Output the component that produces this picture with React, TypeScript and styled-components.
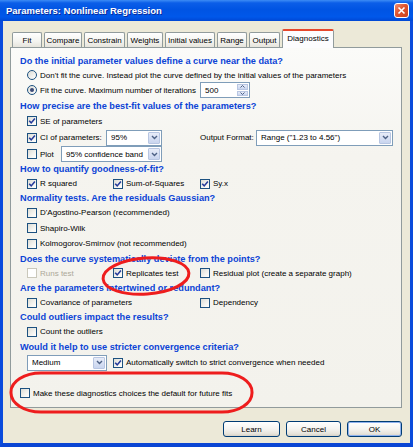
import React from 'react'
import styled, { createGlobalStyle } from 'styled-components'

const GlobalStyle = createGlobalStyle`
  html, body {
    margin: 0;
    padding: 0;
    background: #ffffff;
  }
  body {
    font-family: "Liberation Sans", Arial, sans-serif;
    font-size: 8px;
    color: #000000;
  }
`

const Window = styled.div`
  position: relative;
  width: 413px;
  height: 447px;
  display: flex;
  flex-direction: column;
  background: #ece9d8;
  overflow: hidden;
`

const TitleBar = styled.div`
  height: 21px;
  flex: none;
  display: flex;
  align-items: center;
  justify-content: space-between;
  padding: 0 4px 0 6px;
  background: linear-gradient(
    to bottom,
    #3d8cf5 0%,
    #0b5ee8 14%,
    #0054e3 45%,
    #0058ea 80%,
    #0047d4 100%
  );
`

const Title = styled.span`
  font-weight: bold;
  font-size: 9.5px;
  color: #ffffff;
  text-shadow: 1px 1px 0 #0b2b9a;
  white-space: nowrap;
`

const CloseButton = styled.div`
  width: 15px;
  height: 15px;
  box-sizing: border-box;
  border: 1px solid #ffffff;
  border-radius: 3px;
  background: linear-gradient(135deg, #f08e70 0%, #e0542f 45%, #c8411d 100%);
  display: flex;
  align-items: center;
  justify-content: center;
`

const Frame = styled.div`
  flex: 1;
  display: flex;
  flex-direction: column;
  border-left: 3px solid #0a4bdc;
  border-right: 3px solid #0a4bdc;
  border-bottom: 4px solid #0a45d4;
  padding: 8px 8px 0 7px;
`

const TabStrip = styled.div`
  height: 18px;
  flex: none;
  display: flex;
  align-items: flex-end;
  gap: 2px;
  padding-left: 2px;
`

const Tab = styled.div<{ $w: number; $active?: boolean }>`
  width: ${p => p.$w}px;
  height: ${p => (p.$active ? 19 : 15)}px;
  margin-bottom: ${p => (p.$active ? -1 : 0)}px;
  position: relative;
  z-index: ${p => (p.$active ? 2 : 1)};
  box-sizing: border-box;
  display: flex;
  align-items: center;
  justify-content: center;
  padding-bottom: ${p => (p.$active ? 2 : 0)}px;
  border: 1px solid #919b9c;
  border-bottom: none;
  border-top: ${p => (p.$active ? '2px solid #e6472c' : '1px solid #919b9c')};
  border-radius: 2px 2px 0 0;
  background: ${p =>
    p.$active ? '#fcfcfe' : 'linear-gradient(to bottom, #ffffff 0%, #f3f3ef 60%, #e6e4dc 100%)'};
  white-space: nowrap;
`

const Panel = styled.div`
  height: 361px;
  flex: none;
  box-sizing: border-box;
  border: 1px solid #919b9c;
  padding: 6px 0 0 9px;
  display: flex;
  flex-direction: column;
  background: linear-gradient(to bottom, #fbfbf9 0%, #f5f4ef 30%, #f3f2ec 100%);
`

const Heading = styled.div<{ $h: number }>`
  height: ${p => p.$h}px;
  flex: none;
  display: flex;
  align-items: center;
  font-weight: bold;
  font-size: 9.2px;
  color: #0c44d6;
  white-space: nowrap;
`

const Row = styled.div<{ $h: number; $pl?: number; $mt?: number }>`
  height: ${p => p.$h}px;
  flex: none;
  display: flex;
  align-items: center;
  padding-left: ${p => p.$pl ?? 7}px;
  margin-top: ${p => p.$mt ?? 0}px;
  white-space: nowrap;
`

const Cell = styled.div<{ $w?: number }>`
  ${p => (p.$w ? `width: ${p.$w}px; flex: none;` : 'flex: 1;')}
  display: flex;
  align-items: center;
`

const OptionLabel = styled.label<{ $disabled?: boolean }>`
  display: flex;
  align-items: center;
  gap: 3px;
  color: ${p => (p.$disabled ? '#aca899' : '#000000')};
  white-space: nowrap;
`

const Box = styled.span<{ $disabled?: boolean }>`
  width: 10px;
  height: 10px;
  flex: none;
  box-sizing: border-box;
  border: 1px solid ${p => (p.$disabled ? '#cac8bb' : '#1c5180')};
  background: ${p =>
    p.$disabled ? '#ffffff' : 'linear-gradient(135deg, #dcdcd5 0%, #f4f4f0 60%, #ffffff 100%)'};
  display: flex;
  align-items: center;
  justify-content: center;
`

const Radio = styled.span`
  width: 10px;
  height: 10px;
  flex: none;
  box-sizing: border-box;
  border: 1px solid #1c5180;
  border-radius: 50%;
  background: linear-gradient(135deg, #dcdcd5 0%, #ffffff 100%);
  display: flex;
  align-items: center;
  justify-content: center;
`

const Dot = styled.span`
  width: 4px;
  height: 4px;
  border-radius: 50%;
  background: #3a4a78;
`

const Field = styled.div<{ $w: number }>`
  width: ${p => p.$w}px;
  height: 16px;
  flex: none;
  box-sizing: border-box;
  border: 1px solid #7f9db9;
  background: #ffffff;
  display: flex;
  align-items: center;
  justify-content: space-between;
  padding: 1px;
`

const FieldText = styled.span`
  padding-left: 3px;
  white-space: nowrap;
`

const DropButton = styled.span`
  width: 12px;
  height: 12px;
  flex: none;
  box-sizing: border-box;
  border: 1px solid #b8c6e2;
  border-radius: 1px;
  background: linear-gradient(to bottom, #e7ecf8 0%, #c9d5ef 100%);
  display: flex;
  align-items: center;
  justify-content: center;
`

const SpinButtons = styled.span`
  width: 11px;
  height: 12px;
  flex: none;
  display: flex;
  flex-direction: column;
  gap: 1px;
`

const SpinPart = styled.span`
  flex: 1;
  box-sizing: border-box;
  border: 1px solid #b8c6e2;
  background: linear-gradient(to bottom, #e7ecf8 0%, #c9d5ef 100%);
  display: flex;
  align-items: center;
  justify-content: center;
`

const FieldCaption = styled.span`
  width: 56px;
  flex: none;
  white-space: nowrap;
`

const ButtonRow = styled.div`
  display: flex;
  justify-content: flex-end;
  gap: 6px;
  padding-top: 13px;
`

const Button = styled.div<{ $w: number; $default?: boolean }>`
  width: ${p => p.$w}px;
  height: 16px;
  box-sizing: border-box;
  border: 1px solid #003c74;
  border-radius: 3px;
  background: linear-gradient(to bottom, #ffffff 0%, #f5f4f0 50%, #e6e3da 85%, #d6d0c5 100%);
  box-shadow: ${p => (p.$default ? 'inset 0 0 0 1px #8fb2ee' : 'none')};
  display: flex;
  align-items: center;
  justify-content: center;
`

const Overlay = styled.svg`
  position: absolute;
  top: 0;
  left: 0;
  pointer-events: none;
`

const CheckMark = () => (
  <svg width="8" height="8" viewBox="0 0 8 8">
    <path d="M1.2 3.8 L3.2 5.9 L6.9 1.6" fill="none" stroke="#243a9a" strokeWidth="1.6" />
  </svg>
)

const Chevron = () => (
  <svg width="7" height="5" viewBox="0 0 7 5">
    <path d="M1 1 L3.5 3.5 L6 1" fill="none" stroke="#4d6185" strokeWidth="1.4" />
  </svg>
)

const Check = ({
  label,
  checked,
  disabled,
}: {
  label: string
  checked?: boolean
  disabled?: boolean
}) => (
  <OptionLabel $disabled={disabled}>
    <Box $disabled={disabled}>{checked && <CheckMark />}</Box>
    <span>{label}</span>
  </OptionLabel>
)

const RadioOption = ({ label, checked }: { label: string; checked?: boolean }) => (
  <OptionLabel>
    <Radio>{checked && <Dot />}</Radio>
    <span>{label}</span>
  </OptionLabel>
)

const Select = ({ value, w }: { value: string; w: number }) => (
  <Field $w={w}>
    <FieldText>{value}</FieldText>
    <DropButton>
      <Chevron />
    </DropButton>
  </Field>
)

const tabs = [
  { label: 'Fit', w: 30 },
  { label: 'Compare', w: 38 },
  { label: 'Constrain', w: 41 },
  { label: 'Weights', w: 36 },
  { label: 'Initial values', w: 50 },
  { label: 'Range', w: 30 },
  { label: 'Output', w: 31 },
  { label: 'Diagnostics', w: 52, active: true },
]

export default function App() {
  return (
    <>
      <GlobalStyle />
      <Window>
        <TitleBar>
          <Title>Parameters: Nonlinear Regression</Title>
          <CloseButton>
            <svg width="9" height="9" viewBox="0 0 9 9">
              <path d="M1.5 1.5 L7.5 7.5 M7.5 1.5 L1.5 7.5" stroke="#ffffff" strokeWidth="1.6" />
            </svg>
          </CloseButton>
        </TitleBar>
        <Frame>
          <TabStrip>
            {tabs.map(t => (
              <Tab key={t.label} $w={t.w} $active={t.active}>
                {t.label}
              </Tab>
            ))}
          </TabStrip>
          <Panel>
            <Heading $h={14}>Do the initial parameter values define a curve near the data?</Heading>
            <Row $h={14}>
              <RadioOption label="Don't fit the curve. Instead plot the curve defined by the initial values of the parameters" />
            </Row>
            <Row $h={16}>
              <Cell $w={173}>
                <RadioOption label="Fit the curve. Maximum number of iterations" checked />
              </Cell>
              <Field $w={50}>
                <FieldText>500</FieldText>
                <SpinButtons>
                  <SpinPart>
                    <svg width="5" height="3" viewBox="0 0 5 3">
                      <path d="M0.5 2.5 L2.5 0.5 L4.5 2.5" fill="none" stroke="#4d6185" strokeWidth="1" />
                    </svg>
                  </SpinPart>
                  <SpinPart>
                    <svg width="5" height="3" viewBox="0 0 5 3">
                      <path d="M0.5 0.5 L2.5 2.5 L4.5 0.5" fill="none" stroke="#4d6185" strokeWidth="1" />
                    </svg>
                  </SpinPart>
                </SpinButtons>
              </Field>
            </Row>
            <Heading $h={15}>How precise are the best-fit values of the parameters?</Heading>
            <Row $h={16}>
              <Check label="SE of parameters" checked />
            </Row>
            <Row $h={17}>
              <Cell $w={79}>
                <Check label="CI of parameters:" checked />
              </Cell>
              <Cell $w={94}>
                <Select value="95%" w={56} />
              </Cell>
              <Cell>
                <FieldCaption>Output Format:</FieldCaption>
                <Select value={'Range ("1.23 to 4.56")'} w={137} />
              </Cell>
            </Row>
            <Row $h={16}>
              <Cell $w={34}>
                <Check label="Plot" />
              </Cell>
              <Select value="95% confidence band" w={101} />
            </Row>
            <Heading $h={14}>How to quantify goodness-of-fit?</Heading>
            <Row $h={15}>
              <Cell $w={86}>
                <Check label="R squared" checked />
              </Cell>
              <Cell $w={87}>
                <Check label="Sum-of-Squares" checked />
              </Cell>
              <Cell>
                <Check label="Sy.x" checked />
              </Cell>
            </Row>
            <Heading $h={14}>Normality tests. Are the residuals Gaussian?</Heading>
            <Row $h={15}>
              <Check label="D'Agostino-Pearson (recommended)" />
            </Row>
            <Row $h={16}>
              <Check label="Shapiro-Wilk" />
            </Row>
            <Row $h={15}>
              <Check label="Kolmogorov-Smirnov (not recommended)" />
            </Row>
            <Heading $h={15}>Does the curve systematically deviate from the points?</Heading>
            <Row $h={14}>
              <Cell $w={86}>
                <Check label="Runs test" disabled />
              </Cell>
              <Cell $w={87}>
                <Check label="Replicates test" checked />
              </Cell>
              <Cell>
                <Check label="Residual plot (create a separate graph)" />
              </Cell>
            </Row>
            <Heading $h={15}>Are the parameters intertwined or redundant?</Heading>
            <Row $h={15}>
              <Cell $w={173}>
                <Check label="Covariance of parameters" />
              </Cell>
              <Cell>
                <Check label="Dependency" />
              </Cell>
            </Row>
            <Heading $h={14}>Could outliers impact the results?</Heading>
            <Row $h={15}>
              <Check label="Count the outliers" />
            </Row>
            <Heading $h={15}>Would it help to use stricter convergence criteria?</Heading>
            <Row $h={17}>
              <Cell $w={86}>
                <Select value="Medium" w={80} />
              </Cell>
              <Cell>
                <Check label="Automatically switch to strict convergence when needed" checked />
              </Cell>
            </Row>
            <Row $h={16} $pl={-1} $mt={14}>
              <Check label="Make these diagnostics choices the default for future fits" />
            </Row>
          </Panel>
          <ButtonRow>
            <Button $w={57}>Learn</Button>
            <Button $w={55}>Cancel</Button>
            <Button $w={55} $default>
              OK
            </Button>
          </ButtonRow>
        </Frame>
        <Overlay width="413" height="447" viewBox="0 0 413 447">
          <ellipse
            cx="146"
            cy="276"
            rx="43"
            ry="18"
            transform="rotate(-4 146 276)"
            fill="none"
            stroke="#ee1d1d"
            strokeWidth="3"
          />
          <rect x="11" y="373" width="241" height="39" rx="30" ry="19" fill="none" stroke="#ee1d1d" strokeWidth="3" />
        </Overlay>
      </Window>
    </>
  )
}
